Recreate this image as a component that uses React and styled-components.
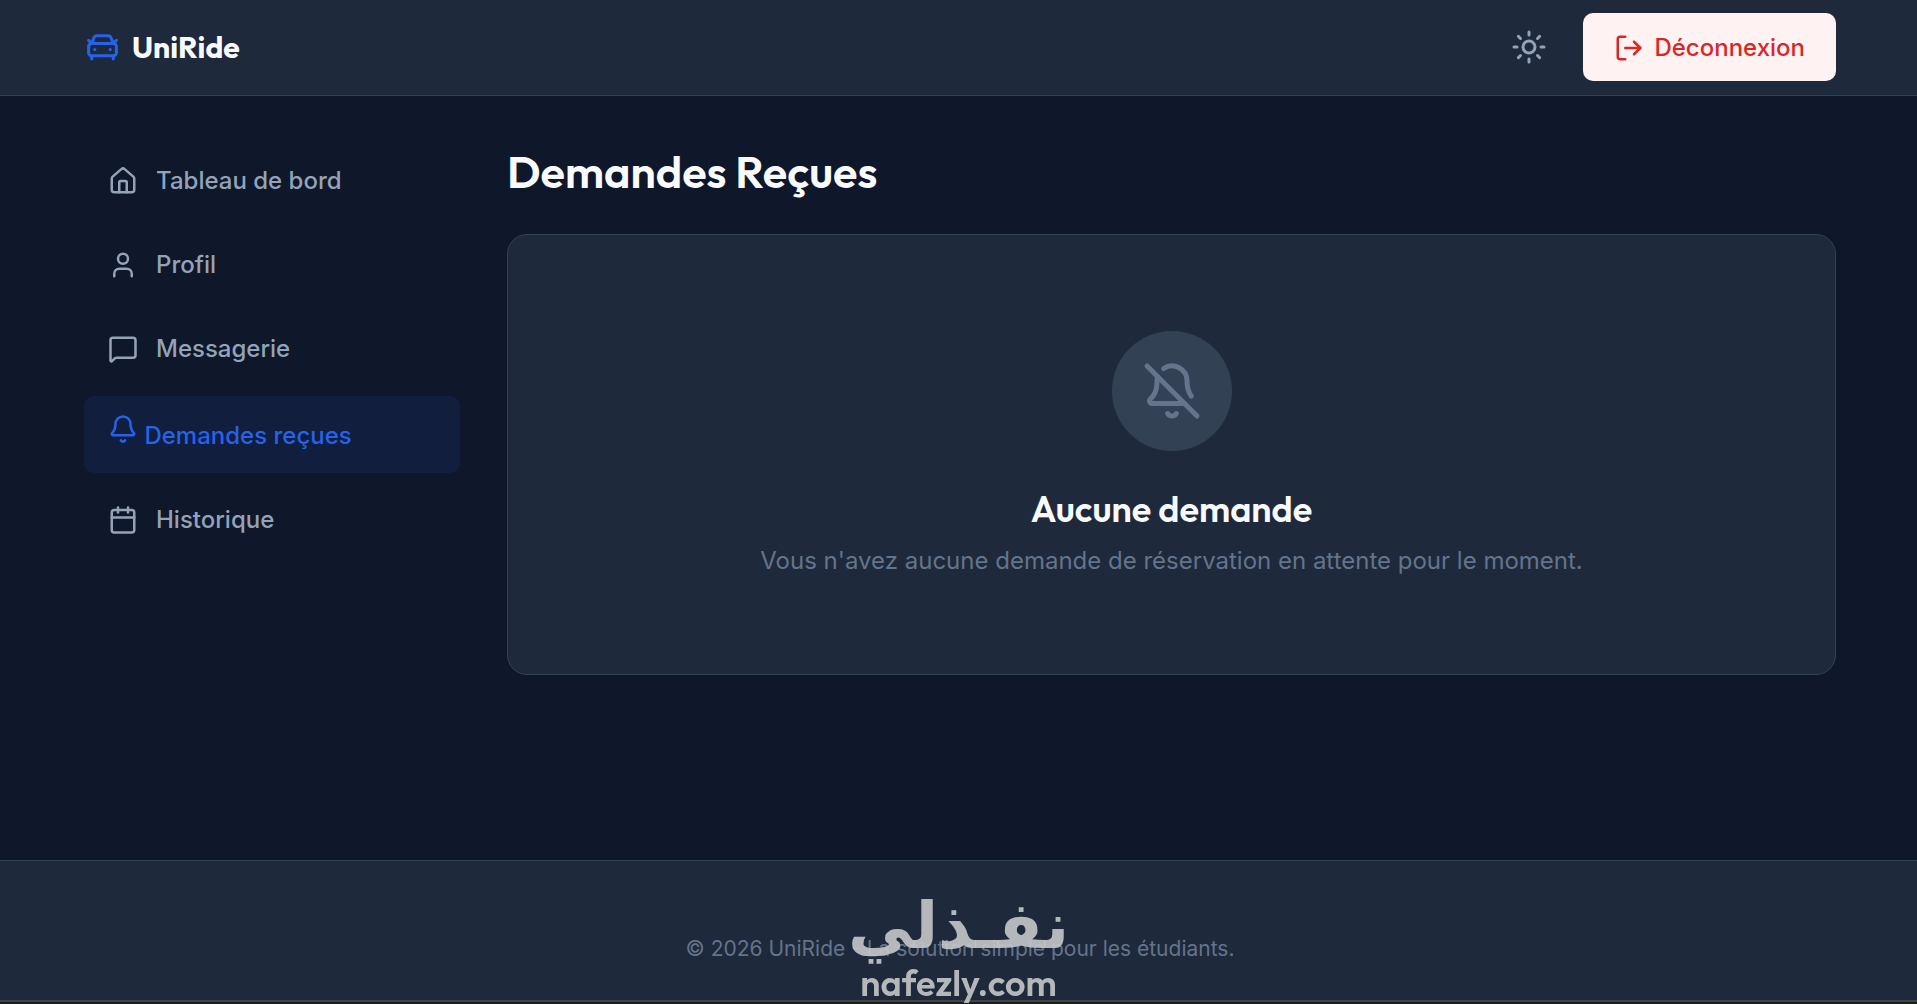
import React, { useState } from "react";
import styled, { createGlobalStyle } from "styled-components";
import {
  Bell,
  BellOff,
  Calendar,
  CarFront,
  House,
  LogOut,
  MessageSquare,
  Sun,
  User
} from "lucide-react";

const GlobalStyle = createGlobalStyle`
  * {
    box-sizing: border-box;
  }

  body {
    margin: 0;
    background: #0f172a;
    color: #f8fafc;
    font-family: Inter, "Liberation Sans", sans-serif;
    font-size: 24px;
    line-height: 36px;
  }

  h1,
  h2,
  p {
    margin: 0;
  }
`;

const headingFont = `Outfit, Lato, "Open Sans", sans-serif`;

const Page = styled.div`
  display: flex;
  flex-direction: column;
  min-height: 100vh;
`;

const Header = styled.header`
  display: flex;
  align-items: center;
  justify-content: space-between;
  height: 96px;
  padding: 0 81px 2px 84px;
  background: #1e293b;
  border-bottom: 1px solid #334155;
`;

const Brand = styled.a`
  display: flex;
  align-items: center;
  gap: 11px;
  color: #f8fafc;
  font-family: ${headingFont};
  font-size: 30px;
  font-weight: 700;
  text-decoration: none;

  svg {
    color: #2563eb;
  }
`;

const HeaderActions = styled.div`
  display: flex;
  align-items: center;
  gap: 26px;
`;

const ThemeToggle = styled.button`
  display: flex;
  padding: 10px;
  border: 0;
  border-radius: 50%;
  background: transparent;
  color: #94a3b8;
  cursor: pointer;
`;

const LogoutButton = styled.button`
  display: flex;
  align-items: center;
  gap: 10px;
  padding: 17px 31px 15px;
  border: 0;
  border-radius: 10px;
  background: #fef2f2;
  color: #dc2626;
  font: inherit;
  font-weight: 500;
  cursor: pointer;
`;

const Content = styled.div`
  display: grid;
  grid-template-columns: 376px minmax(0, 1fr);
  gap: 47px;
  flex: 1;
  padding: 48px 81px 48px 84px;
`;

const Nav = styled.nav`
  display: flex;
  flex-direction: column;
  gap: 10px;
`;

const NavLink = styled.a`
  display: flex;
  align-items: center;
  gap: 18px;
  padding: 19px 24px;
  border-radius: 10px;
  color: #94a3b8;
  font-weight: 500;
  text-decoration: none;

  &.active {
    display: block;
    padding: 18px 24px 19px;
    background: rgba(37, 99, 235, 0.1);
    color: #2563eb;
  }
`;

const Title = styled.h1`
  margin-bottom: 34px;
  font-family: ${headingFont};
  font-size: 45px;
  font-weight: 600;
  line-height: 56px;
`;

const EmptyCard = styled.section`
  display: flex;
  flex-direction: column;
  align-items: center;
  padding: 96px 24px 95px;
  background: #1e293b;
  border: 1px solid #334155;
  border-radius: 20px;
  text-align: center;
`;

const IconCircle = styled.div`
  display: flex;
  align-items: center;
  justify-content: center;
  width: 120px;
  height: 120px;
  margin-bottom: 36px;
  border-radius: 50%;
  background: #334155;
  color: #64748b;
`;

const EmptyTitle = styled.h2`
  margin-bottom: 12px;
  font-family: ${headingFont};
  font-size: 36px;
  font-weight: 600;
  line-height: 44px;
`;

const EmptyText = styled.p`
  color: #64748b;
`;

const Footer = styled.footer`
  height: 140px;
  padding: 70px 81px 0 84px;
  background: #1e293b;
  border-top: 1px solid #334155;
  color: #64748b;
  font-size: 21px;
  text-align: center;
`;

const BottomEdge = styled.div`
  height: 4px;
  background: #1c1c1c;
  border-top: 2px solid #424347;
`;

const Watermark = styled.div`
  position: fixed;
  bottom: 0;
  left: 50%;
  transform: translateX(-50%);
  display: flex;
  flex-direction: column;
  align-items: center;
  color: rgba(196, 200, 202, 0.9);
  pointer-events: none;
`;

const WatermarkName = styled.span`
  font-family: "DejaVu Sans", sans-serif;
  font-size: 65px;
  font-weight: 700;
  line-height: 72px;
`;

const WatermarkSite = styled.span`
  font-family: ${headingFont};
  font-size: 36px;
  font-weight: 600;
  line-height: 42px;
`;

const links = [
  { label: "Tableau de bord", icon: House },
  { label: "Profil", icon: User },
  { label: "Messagerie", icon: MessageSquare },
  { label: "Demandes reçues", icon: Bell },
  { label: "Historique", icon: Calendar }
];

function Sidebar({ current, onSelect }) {
  return (
    <Nav aria-label="Menu">
      {links.map(({ label, icon: Icon }) => (
        <NavLink
          key={label}
          href="#"
          className={label === current ? "active" : ""}
          onClick={e => {
            e.preventDefault();
            onSelect(label);
          }}
        >
          <Icon size={30} /> <span>{label}</span>
        </NavLink>
      ))}
    </Nav>
  );
}

export default function App() {
  const [current, setCurrent] = useState("Demandes reçues");

  return (
    <Page>
      <GlobalStyle />
      <Header>
        <Brand href="#">
          <CarFront size={37} />
          UniRide
        </Brand>
        <HeaderActions>
          <ThemeToggle type="button" aria-label="Changer de thème">
            <Sun size={36} />
          </ThemeToggle>
          <LogoutButton type="button">
            <LogOut size={30} />
            Déconnexion
          </LogoutButton>
        </HeaderActions>
      </Header>
      <Content>
        <Sidebar current={current} onSelect={setCurrent} />
        <main>
          <Title>Demandes Reçues</Title>
          <EmptyCard>
            <IconCircle>
              <BellOff size={60} />
            </IconCircle>
            <EmptyTitle>Aucune demande</EmptyTitle>
            <EmptyText>
              Vous n'avez aucune demande de réservation en attente pour le
              moment.
            </EmptyText>
          </EmptyCard>
        </main>
      </Content>
      <Footer>© 2026 UniRide - La solution simple pour les étudiants.</Footer>
      <BottomEdge />
      <Watermark>
        <WatermarkName lang="ar" dir="rtl">
          نفـذلي
        </WatermarkName>
        <WatermarkSite>nafezly.com</WatermarkSite>
      </Watermark>
    </Page>
  );
}
